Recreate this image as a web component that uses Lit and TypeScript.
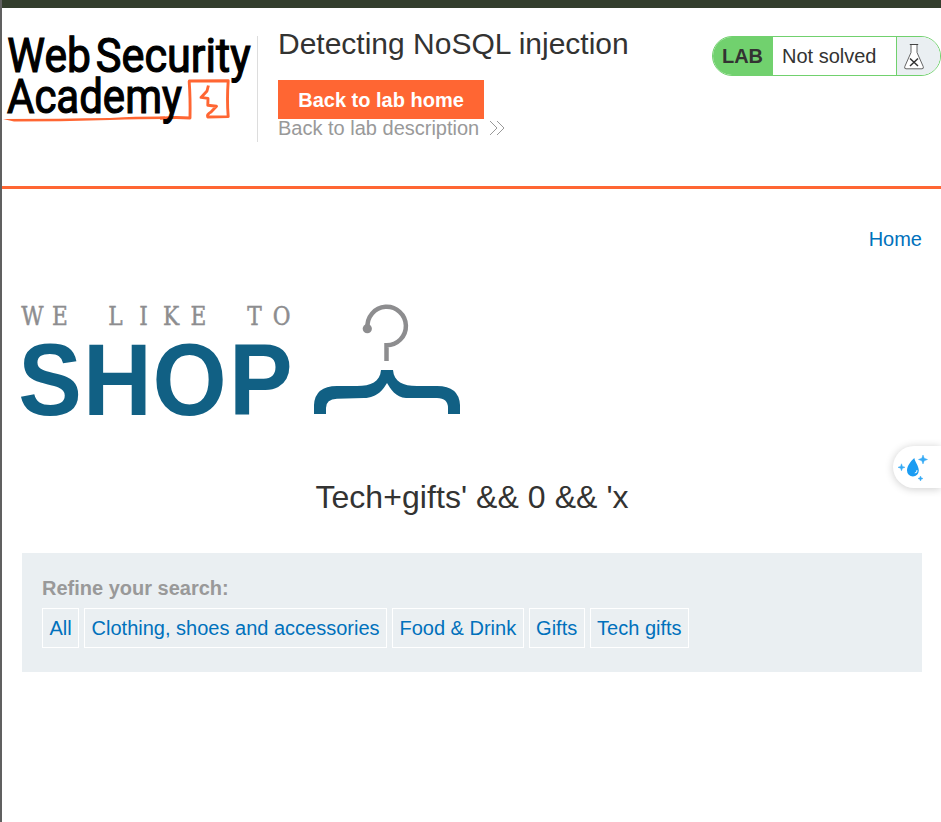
import { LitElement, html, css } from "lit";
import { customElement } from "lit/decorators.js";

const CATEGORIES = ["All", "Clothing, shoes and accessories", "Food & Drink", "Gifts", "Tech gifts"];

@customElement("academy-header")
export class AcademyHeader extends LitElement {
  static styles = css`
    :host { display: flex; height: 178px; border-bottom: 3px solid #ff6633; box-sizing: content-box; }
    .logo { display: block; flex: none; width: 255px; height: 100px; margin-top: 26px; overflow: visible; }
    .logo text { font-family: Roboto, "Liberation Sans", sans-serif; font-weight: 400; font-size: 48px; fill: #000; stroke: #000; stroke-width: 1.2px; }
    .title-box { flex: none; height: 106px; margin-top: 28px; border-left: 1px solid #dddddd; padding-left: 20px; }
    h2 { margin: 0; margin-top: -11px; height: 55px; line-height: 38px; font-size: 30px; font-weight: 400; white-space: nowrap; color: #333332; }
    .button { display: block; box-sizing: border-box; width: 206px; height: 39px; line-height: 40px; background: #ff6633; color: #fff; font-weight: 700; text-align: center; text-decoration: none; }
    .back { display: flex; align-items: center; height: 18px; line-height: 18px; color: #999; text-decoration: none; white-space: nowrap; }
    .back svg { width: 16px; height: 18px; margin-left: 10px; }
    .status { display: flex; box-sizing: border-box; width: 229px; height: 40px; margin-left: auto; margin-top: 28px; border: 1px solid #71d16e; border-radius: 20px; overflow: hidden; line-height: 38px; flex: none; }
    .lab { width: 59px; padding-right: 1px; background: #71d16e; font-weight: 700; text-align: center; }
    .state { width: 113px; padding-left: 9px; padding-right: 1px; }
    .flask { flex: 1; background: #eaeff2; border-left: 1px solid #71d16e; }
    .flask svg { display: block; width: 34px; height: 38px; }
  `;
  render() {
    return html`
      <svg class="logo" viewBox="2 34 255 100" role="img" aria-label="Web Security Academy">
        <text x="7.3" y="71.8" textLength="83.5" lengthAdjust="spacingAndGlyphs">Web</text>
        <text x="95.8" y="71.8" textLength="154.8" lengthAdjust="spacingAndGlyphs">Security</text>
        <path d="M160 118.2 Q175 117 190 118 Q190.4 98 189.2 81.7 L189.4 81 L228.2 80.8 Q226.8 100 228.2 116.6 L207.8 117 Q206.5 114.5 211 112 L216.5 106.3 L207.8 105.3 L208 98.4 L201 97.4 L207 91 L208.4 85.5" fill="none" stroke="#ff6633" stroke-width="2.9" stroke-linejoin="round"/>
        <path d="M3 119 Q60 118.8 110 118 Q140 116.4 165 116.6 V119 Q140 119 110 119.9 L60 121.3 L14 121.5 Z" fill="#ff6633"/>
        <text x="7" y="112.8" textLength="174.8" lengthAdjust="spacingAndGlyphs">Academy</text>
      </svg>
      <div class="title-box">
        <h2>Detecting NoSQL injection</h2>
        <a class="button">Back to lab home</a>
        <a class="back"><span>Back to lab description</span>
          <svg viewBox="0 0 16 18" fill="none" stroke="#999" stroke-width="1"><path d="M1 2 L8 9 L1 16 M8 2 L15 9 L8 16"/></svg>
        </a>
      </div>
      <div class="status">
        <div class="lab">LAB</div>
        <div class="state">Not solved</div>
        <div class="flask"><svg viewBox="897 37 34 38"><path d="M911 45 V52.5 L904.8 66.5 Q904 68.8 906 68.8 H922 Q924 68.8 923.2 66.5 L917 52.5 V45" fill="#fff" stroke="#555" stroke-width=".9"/><path d="M909.8 44.5 H918.2" stroke="#444" stroke-width="1.2"/><path d="M910 58.5 L918 66 M918 58.5 L910 66" stroke="#333" stroke-width="1.5"/></svg></div>
      </div>`;
  }
}

@customElement("shop-logo")
export class ShopLogo extends LitElement {
  static styles = css`
    :host { display: block; }
    svg { display: block; width: 445px; height: 120px; overflow: visible; }
    .tag { font-family: "DejaVu Serif", "Liberation Mono", serif; font-size: 25.5px; fill: #8d8d8f; stroke: #8d8d8f; stroke-width: .5px; text-anchor: middle; }
    .name { font-family: "Liberation Sans", Arial, sans-serif; font-weight: 700; font-size: 102px; fill: #116084; }
  `;
  render() {
    return html`<svg viewBox="20 300 445 120" role="img" aria-label="We like to shop">
      <text class="tag" y="324.8" transform="scale(.85 1)" x="38.2 70.6 102.6 135.9 168.8 201.2 233.5 266.4 299.4 331.4">WE LIKE TO</text>
      <text class="name" y="415" transform="scale(.935 1)" x="19.6 88.8 163 244.8">SHOP</text>
      <path d="M367.6 328 A19.2 19.2 0 1 1 386.5 345.2 V361" fill="none" stroke="#8d8d8f" stroke-width="4.5"/>
      <circle cx="367.3" cy="328.7" r="4.6" fill="#8d8d8f"/>
      <path d="M314 414 V405 Q315 386 337 386 H357 C371 386 380 382 381 370 H393 C394 382 403 386 417 386 H437 Q459 386 460 405 V414 H448 V408 Q448 398 437 398 L406 398 C396 398 390 388 387 383 C384 388 378 398 364 398 L337 398.7 Q326 399 326 408 V414 Z" fill="#116084"/>
    </svg>`;
  }
}

@customElement("search-filters")
export class SearchFilters extends LitElement {
  static styles = css`
    :host { display: block; box-sizing: border-box; height: 119px; padding: 20px; background: #eaeff2; }
    .label { height: 30px; line-height: 30px; margin-bottom: 5px; font-weight: 700; color: #999; }
    .list { display: flex; gap: 5px; }
    a { box-sizing: border-box; height: 40px; padding: 0 6.46px; border: 1px solid #fff; line-height: 38px; color: #0071bc; white-space: nowrap; }
  `;
  render() {
    return html`<div class="label">Refine your search:</div>
      <div class="list">${CATEGORIES.map((c) => html`<a>${c}</a>`)}</div>`;
  }
}

@customElement("app-root")
export class AppRoot extends LitElement {
  static styles = css`
    :host { display: block; position: relative; box-sizing: border-box; height: 822px; overflow: hidden; background: #fff; border-left: 2px solid #606060; font: 20px "Liberation Sans", Arial, sans-serif; color: #333332; }
    .strip { height: 8px; background: #333e2d; }
    main { padding: 0 19px 0 20px; }
    nav { height: 100px; line-height: 100px; text-align: right; color: #0071bc; }
    shop-logo { margin: 11px 0 0 -2px; }
    h1 { margin: 0; height: 133px; line-height: 154px; text-align: center; font-size: 32px; font-weight: 400; letter-spacing: .06px; }
    .droplet { position: absolute; right: 0; top: 446px; width: 48px; height: 42px; border-radius: 21px 0 0 21px; background: #fff; box-shadow: 0 1px 9px #0003; }
    .droplet svg { display: block; width: 48px; height: 42px; }
  `;
  render() {
    return html`
      <div class="strip"></div>
      <academy-header></academy-header>
      <main>
        <nav><a>Home</a></nav>
        <shop-logo></shop-logo>
        <h1>Tech+gifts' &amp;&amp; 0 &amp;&amp; 'x</h1>
        <search-filters></search-filters>
      </main>
      <div class="droplet"><svg viewBox="893 446 48 42">
        <path d="M914.3 458 C911 461 907 466 907 470.5 A5.9 5.9 0 0 0 918.8 470.5 C918.8 466 915 462 914.3 458 Z" fill="#1b9cf2"/>
        <path d="M914.8 473 Q917 472.5 917 470 Q917.8 473 914.8 473" fill="#fff" stroke="#fff" stroke-width=".5"/>
        <path d="M923 455 L924.2 458.3 L927.5 459.5 L924.2 460.7 L923 464 L921.8 460.7 L918.5 459.5 L921.8 458.3 Z M901.5 463.8 L902.4 466.4 L905 467.3 L902.4 468.2 L901.5 470.8 L900.6 468.2 L898 467.3 L900.6 466.4 Z M920.5 476 L921.2 477.8 L923 478.5 L921.2 479.2 L920.5 481 L919.8 479.2 L918 478.5 L919.8 477.8 Z" fill="#36aaf5" stroke="#36aaf5" stroke-width=".5"/>
      </svg></div>`;
  }
}
